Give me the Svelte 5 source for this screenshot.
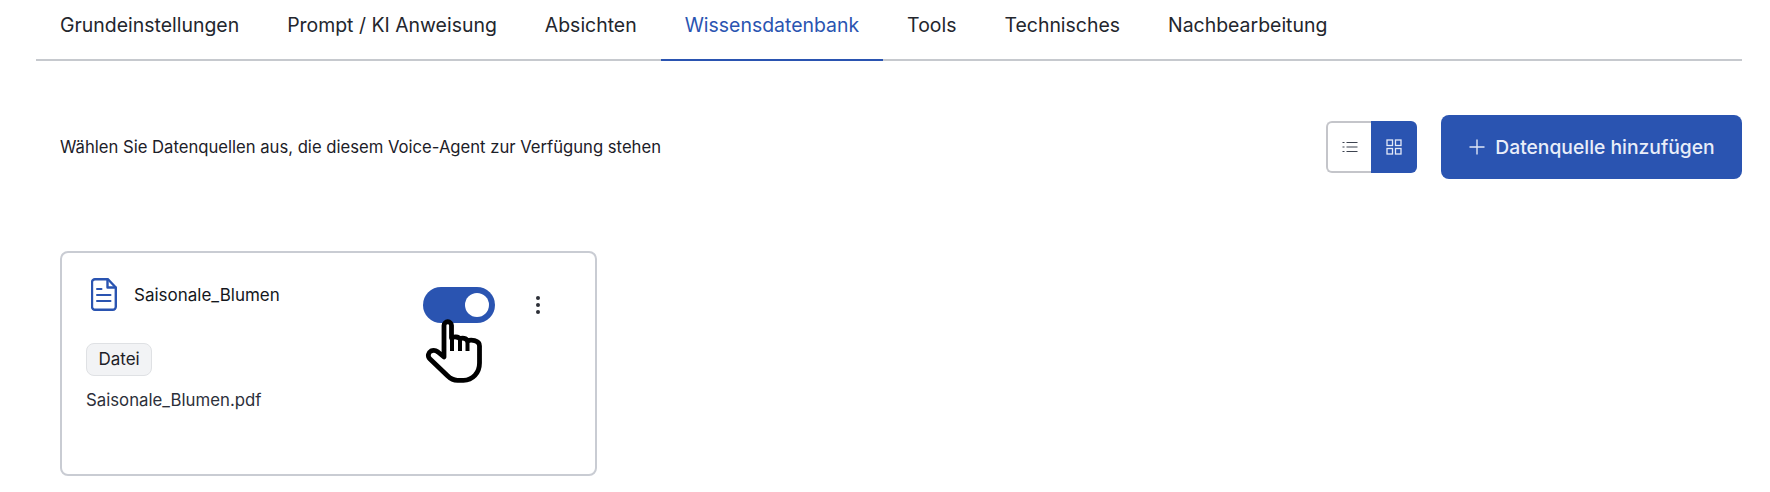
<script>
    const tabs = ["Grundeinstellungen", "Prompt / KI Anweisung", "Absichten", "Wissensdatenbank", "Tools", "Technisches", "Nachbearbeitung"];
    const activeTab = "Wissensdatenbank";
</script>

<div class="page">
  <nav class="tabs">
    {#each tabs as tab}
      <div class="tab" class:active={tab === activeTab}>{tab}</div>
    {/each}
  </nav>

  <div class="toolbar">
    <p class="hint">Wählen Sie Datenquellen aus, die diesem Voice-Agent zur Verfügung stehen</p>
    <div class="view-switch">
      <div class="view-btn">
        <svg width="16" height="16" viewBox="0 0 16 16" fill="none" stroke="#3d4350" stroke-width="1.2">
          <path d="M4.5 3.5h11M4.5 8h11M4.5 12.5h11" />
          <path d="M.5 3.5h2M.5 8h2M.5 12.5h2" />
        </svg>
      </div>
      <div class="view-btn selected">
        <svg width="16" height="16" viewBox="0 0 16 16" fill="none" stroke="#e3e9f7" stroke-width="1.300">
          <rect x="1" y="1" width="5.500" height="5.500" />
          <rect x="9.500" y="1" width="5.500" height="5.500" />
          <rect x="1" y="9.500" width="5.500" height="5.500" />
          <rect x="9.500" y="9.500" width="5.500" height="5.500" />
        </svg>
      </div>
    </div>
    <button class="add-btn">
      <svg width="18" height="18" viewBox="0 0 18 18" fill="none" stroke="#dfe6f6" stroke-width="1.4">
        <path d="M9 1.5v15M1.5 9h15" />
      </svg>
      Datenquelle hinzufügen
    </button>
  </div>

  <div class="card">
    <div class="card-head">
      <svg class="doc" width="26" height="33" viewBox="0 0 26 33" fill="none" stroke="#2a54b1" stroke-width="2.400" stroke-linejoin="round" stroke-linecap="round">
        <path d="M4 1.200h13l7.800 8.300v19.300a3 3 0 0 1-3 3h-17.800a3 3 0 0 1-3-3v-24.600a3 3 0 0 1 3-3z" />
        <path d="M16.500 1.500v8h8" />
        <path d="M6 11h4.500M6 17h13.500M6 23h13.500" stroke-width="2" />
      </svg>
      <span class="name">Saisonale_Blumen</span>
      <div class="switch"><span class="knob"></span></div>
      <div class="more"><i></i><i></i><i></i></div>
    </div>
    <span class="badge">Datei</span>
    <div class="file">Saisonale_Blumen.pdf</div>

    <svg class="cursor" width="70" height="72" viewBox="0 0 70 72" fill="#fff" stroke="#000" stroke-width="4.800" stroke-linejoin="round" stroke-linecap="round">
      <path d="M24 43V11.500a3.750 3.750 0 0 1 7.500 0V24c2-1.500 7-1.500 8.500 1c2-1.500 6.500-1 7.500 2c3-1.500 12-1 12 5v17c0 10-7 17.300-16 17.300h-6c-4 0-7-1.500-10-4.500L10 45c-3-3-1.500-6.500 1-8c2.500-1.200 5-.5 7 1z" />
      <path d="M32 24V37M40 26V37M47.500 27V37" stroke-width="4" stroke-linecap="butt" />
    </svg>
  </div>
</div>

<style>
  :global(body) {
    margin: 0;
    background: #fff;
  }

  .page {
    font-family: Inter, "Liberation Sans", sans-serif;
    color: #1c2028;
    width: 1770px;
    height: 492px;
    overflow: hidden;
    box-sizing: border-box;
    padding: 0 28px 0 36px;
  }

  .tabs {
    display: flex;
    height: 61px;
    box-sizing: border-box;
    border-bottom: 2px solid #c6c9ce;
  }

  .tab {
    padding: 13px 24px 0;
    font-size: 19.450px;
    height: 61px;
    box-sizing: border-box;
    color: #23262d;
    white-space: nowrap;
  }

  .tab.active {
    color: #2a54b1;
    border-bottom: 2px solid #2a54b1;
  }

  .toolbar {
    display: flex;
    align-items: center;
    padding: 54px 0 0 24px;
    height: 64px;
  }

  .hint {
    margin: 0;
    flex: 1;
    font-size: 16.650px;
  }

  .view-switch {
    display: flex;
    width: 91px;
    height: 52px;
    margin-right: 24px;
  }

  .view-btn {
    flex: 1;
    display: flex;
    align-items: center;
    justify-content: center;
    box-sizing: border-box;
    border: 2px solid #c4c5ca;
    border-right: none;
    border-radius: 6px 0 0 6px;
  }

  .view-btn.selected {
    flex: 0 0 46px;
    background: #2a54b1;
    border: none;
    border-radius: 0 6px 6px 0;
  }

  .add-btn {
    display: flex;
    align-items: center;
    justify-content: center;
    gap: 9px;
    width: 301px;
    height: 64px;
    border: none;
    border-radius: 8px;
    background: #2a54b1;
    color: #e9eef9;
    font-family: Inter, sans-serif;
    font-size: 19.300px;
    font-weight: 500;
  }

  .card {
    position: relative;
    box-sizing: border-box;
    width: 537px;
    height: 225px;
    margin: 72px 0 0 24px;
    padding: 24px 24px 0 24px;
    border: 2px solid #c9ccd3;
    border-radius: 8px;
  }

  .card-head {
    display: flex;
    align-items: flex-start;
    height: 66px;
  }

  .doc {
    margin-left: 5px;
    margin-top: 1px;
  }

  .name {
    margin-left: 17px;
    margin-top: 8px;
    font-size: 17px;
    color: #14171c;
  }

  .switch {
    position: relative;
    margin-left: 143px;
    margin-top: 10px;
    width: 72px;
    height: 36px;
    border-radius: 18px;
    background: #2a54b1;
  }

  .knob {
    position: absolute;
    right: 6px;
    top: 6px;
    width: 24px;
    height: 24px;
    border-radius: 50%;
    background: #fff;
  }

  .more {
    display: flex;
    flex-direction: column;
    gap: 3px;
    margin: 19px 0 0 41px;
  }

  .more i {
    width: 4px;
    height: 4px;
    border-radius: 50%;
    background: #2c2f37;
  }

  .badge {
    display: inline-block;
    padding: 5px 11.500px;
    border: 1px solid #dfe1e4;
    border-radius: 8px;
    background: #f2f3f5;
    font-size: 17px;
    line-height: 21px;
    color: #1d2027;
  }

  .file {
    margin-top: 14px;
    font-size: 16.800px;
    color: #2c303a;
  }

  .cursor {
    position: absolute;
    left: 358px;
    top: 61px;
  }
</style>
